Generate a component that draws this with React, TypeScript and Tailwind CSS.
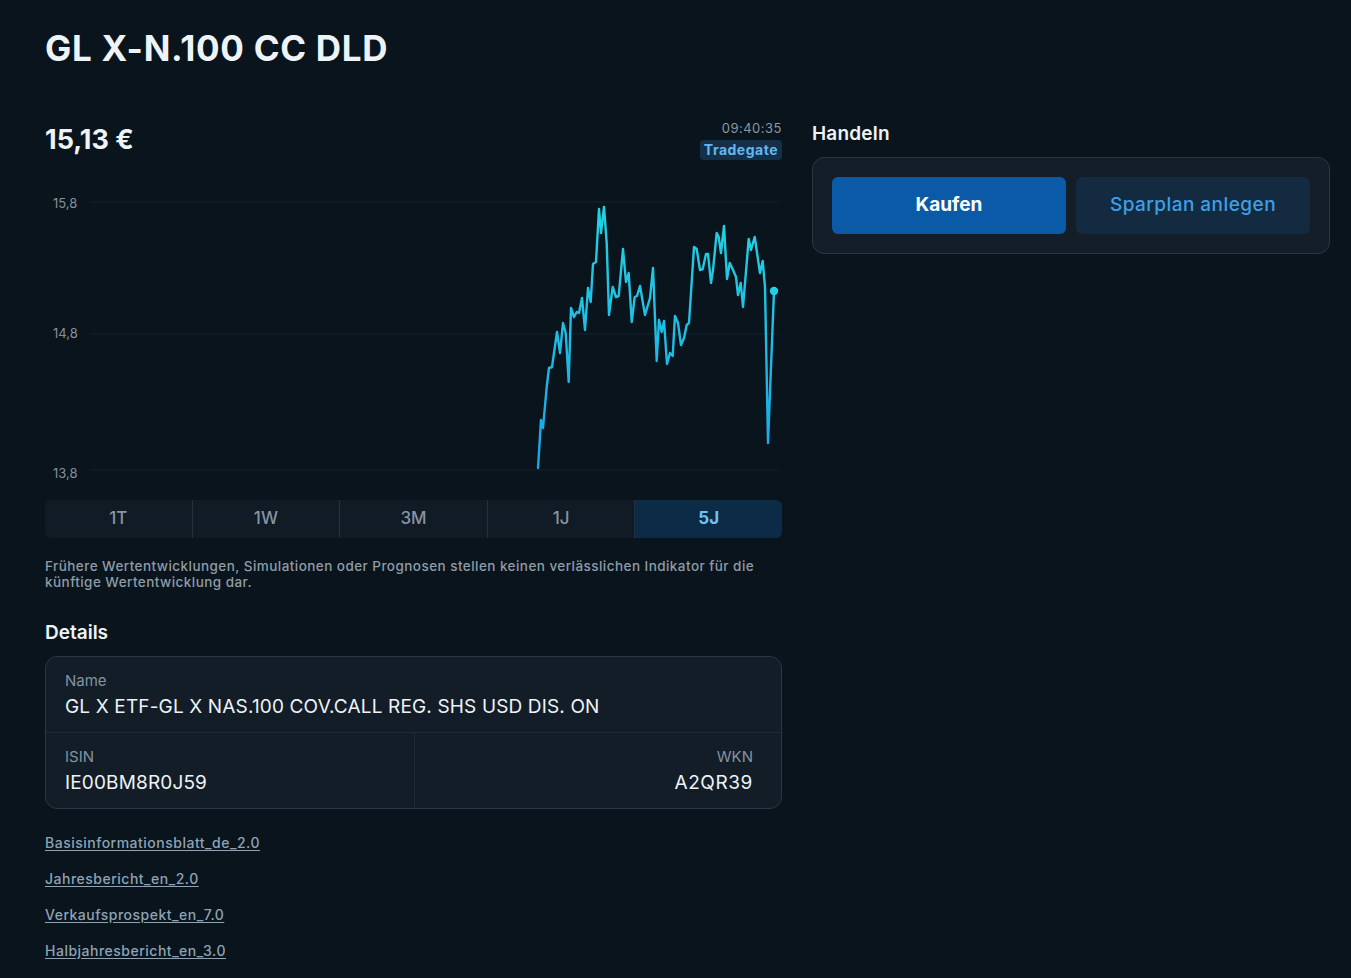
import React from 'react';

const points: [number, number][] = [
  [538, 468], [541, 420], [543, 428], [546.7, 387], [549, 368], [552, 367], [557, 332], [560, 353],
  [563, 323], [565.7, 333], [568.7, 382], [571, 308], [574, 317], [576.7, 312], [579, 313], [582, 298],
  [585, 330], [588, 288], [590.7, 302], [593, 264], [596, 262], [599, 209], [601, 233], [604, 207],
  [606.7, 243], [609, 315], [612.7, 287], [616, 297], [618.7, 296], [623, 249], [626, 282], [628.7, 273],
  [631.7, 322], [634.7, 297], [637, 296], [640, 286], [645, 315], [650, 298], [653, 268], [656.7, 361],
  [659, 320], [661.7, 332], [664, 321], [667, 364], [670, 353], [672.7, 356], [675, 316], [678, 323],
  [681, 345], [684, 338], [686.7, 325], [689, 323], [694, 247], [696.7, 249], [700, 270], [702.7, 269],
  [706, 254], [708, 254], [711, 283], [713, 270], [716.7, 233], [718.7, 237], [721, 253], [724, 226],
  [727, 279], [729.7, 263], [733, 270], [736, 277], [738, 295], [740.7, 283], [743, 307], [748.7, 239],
  [751, 250], [754.7, 237], [760, 273], [762.7, 261], [765, 287], [768, 443], [774, 291],
];

const linePath = points.map((p, i) => `${i === 0 ? 'M' : 'L'}${p[0]} ${p[1]}`).join(' ');

const Chart = () => (
  <svg width="737" height="300" viewBox="45 188 737 300" className="block">
    <defs>
      <linearGradient id="lineGrad" x1="0" y1="200" x2="0" y2="470" gradientUnits="userSpaceOnUse">
        <stop offset="0" stopColor="#22d4e2" />
        <stop offset="1" stopColor="#1aa6e6" />
      </linearGradient>
    </defs>
    {[202, 334, 470].map((y) => (
      <line key={y} x1="90" x2="778" y1={y} y2={y} stroke="#13212c" strokeWidth="1" />
    ))}
    <text x="53" y="208" fill="#83909c" fontSize="13" fontFamily="Inter, sans-serif">15,8</text>
    <text x="53" y="338" fill="#83909c" fontSize="13" fontFamily="Inter, sans-serif">14,8</text>
    <text x="53" y="478" fill="#83909c" fontSize="13" fontFamily="Inter, sans-serif">13,8</text>
    <path d={linePath} fill="none" stroke="url(#lineGrad)" strokeWidth="2.4" strokeLinejoin="round" strokeLinecap="round" />
    <circle cx="774" cy="291" r="4.2" fill="#22cfe4" />
  </svg>
);

const tabs = ['1T', '1W', '3M', '1J', '5J'];

const links = [
  'Basisinformationsblatt_de_2.0',
  'Jahresbericht_en_2.0',
  'Verkaufsprospekt_en_7.0',
  'Halbjahresbericht_en_3.0',
];

const App = () => {
  return (
    <div className="min-h-screen bg-[#0a141c] font-['Inter',sans-serif] text-[#eef3f7]">
      <div className="pl-[45px] pt-[26px]">
        <h1 className="text-[35px] font-bold leading-[44px] tracking-[0.7px]">GL X-N.100 CC DLD</h1>

        <div className="mt-[50px] flex gap-[30px]">
          {/* Left column */}
          <div className="w-[737px]">
            <div className="flex items-start justify-between">
              <div className="mt-[4px] text-[27px] font-bold leading-[32px]">15,13 €</div>
              <div className="flex flex-col items-end">
                <div className="text-[13px] leading-[16px] tracking-[0.5px] text-[#8b97a3]">09:40:35</div>
                <div className="mt-[4px] rounded-[4px] bg-[#143049] px-[4px] text-[14px] font-bold leading-[20px] tracking-[0.5px] text-[#63b6f2]">
                  Tradegate
                </div>
              </div>
            </div>

            <div className="mt-[28px]">
              <Chart />
            </div>

            <div className="mt-[12px] flex h-[38px] overflow-hidden rounded-[6px] bg-[#101b26]">
              {tabs.map((t, i) => (
                <div
                  key={t}
                  className={
                    'flex flex-1 items-center justify-center text-[17px] ' +
                    (i > 0 ? 'border-l border-[#25313d] ' : '') +
                    (t === '5J' ? 'bg-[#0c2b47] font-bold text-[#6ec2f6]' : 'font-medium text-[#8794a1]')
                  }
                >
                  {t}
                </div>
              ))}
            </div>

            <p className="mt-[20px] text-[13.5px] font-medium leading-[16px] tracking-[0.45px] text-[#8f9ca8]">
              Frühere Wertentwicklungen, Simulationen oder Prognosen stellen keinen verlässlichen Indikator für die
              künftige Wertentwicklung dar.
            </p>

            <h2 className="mt-[31px] text-[19px] font-semibold leading-[24px]">Details</h2>

            <div className="mt-[11px] overflow-hidden rounded-[12px] border border-[#2a3743] bg-[#121d27]">
              <div className="px-[19px] pb-[13px] pt-[14px]">
                <div className="text-[15px] leading-[20px] text-[#8592a0]">Name</div>
                <div className="mt-[4px] text-[19px] leading-[24px] tracking-[0.15px]">GL X ETF-GL X NAS.100 COV.CALL REG. SHS USD DIS. ON</div>
              </div>
              <div className="grid grid-cols-2 border-t border-[#1f2b37]">
                <div className="px-[19px] pb-[13px] pt-[14px]">
                  <div className="text-[15px] leading-[20px] text-[#8592a0]">ISIN</div>
                  <div className="mt-[4px] text-[19px] leading-[24px] tracking-[0.15px]">IE00BM8R0J59</div>
                </div>
                <div className="border-l border-[#1f2b37] pb-[13px] pr-[28px] pt-[14px] text-right">
                  <div className="text-[15px] leading-[20px] text-[#8592a0]">WKN</div>
                  <div className="mt-[4px] text-[19px] leading-[24px] tracking-[0.6px]">A2QR39</div>
                </div>
              </div>
            </div>

            <div className="mt-[24px] flex flex-col gap-[16px] pb-[10px]">
              {links.map((l) => (
                <a key={l} className="w-fit text-[14px] font-medium leading-[20px] tracking-[0.5px] text-[#8ea3b6] underline underline-offset-2">
                  {l}
                </a>
              ))}
            </div>
          </div>

          {/* Right column */}
          <div className="w-[518px] pt-[2px]">
            <h2 className="text-[19px] font-semibold leading-[24px] tracking-[0.2px]">Handeln</h2>
            <div className="mt-[11px] rounded-[12px] border border-[#2a3743] bg-[#131e28] p-[19px]">
              <div className="grid grid-cols-2 gap-[10px]">
                <button className="h-[57px] rounded-[6px] bg-[#0a5aa7] text-[19px] font-bold text-white">Kaufen</button>
                <button className="h-[57px] rounded-[6px] bg-[#142a40] text-[19px] font-medium tracking-[0.45px] text-[#3ba0ea]">Sparplan anlegen</button>
              </div>
            </div>
          </div>
        </div>
      </div>
    </div>
  );
};

export default App;
